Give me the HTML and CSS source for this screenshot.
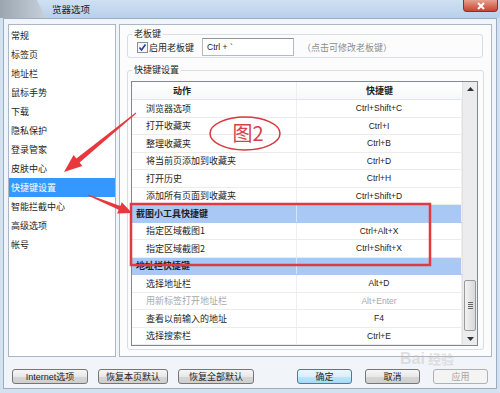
FILE: index.html
```html
<!DOCTYPE html>
<html lang="zh-CN">
<head>
    <meta charset="UTF-8">
    <title>浏览器选项</title>
    <link rel="stylesheet" href="styles.css">
</head>
<body>
    <div class="titlebar">
        <div class="ghost-tab"></div>
        <span class="title">览器选项</span>
        <div class="close">
            <svg width="10" height="8" viewBox="0 0 10 8"><path d="M2 1 L8 7 M8 1 L2 7" stroke="#fff" stroke-width="2"/></svg>
        </div>
    </div>

    <div class="window">
        <div class="main">
            <ul class="nav">
                <li>常规</li>
                <li>标签页</li>
                <li>地址栏</li>
                <li>鼠标手势</li>
                <li>下载</li>
                <li>隐私保护</li>
                <li>登录管家</li>
                <li>皮肤中心</li>
                <li class="active">快捷键设置</li>
                <li>智能拦截中心</li>
                <li>高级选项</li>
                <li>帐号</li>
            </ul>

            <div class="panel">
                <fieldset class="group boss">
                    <legend>老板键</legend>
                    <div class="boss-row">
                        <span class="checkbox">
                            <svg width="11" height="11" viewBox="0 0 11 11"><rect x="0.5" y="0.5" width="10" height="10" fill="#f4f6f9" stroke="#8f8f8f"/><path d="M2.5 5.5 L4.5 8 L8.5 2.5" fill="none" stroke="#2a3d8f" stroke-width="1.6"/></svg>
                        </span>
                        <span class="boss-label">启用老板键</span>
                        <span class="key-input">Ctrl + `</span>
                        <span class="hint">（点击可修改老板键）</span>
                    </div>
                </fieldset>

                <fieldset class="group keys">
                    <legend>快捷键设置</legend>
                    <div class="grid">
                        <div class="rows">
                            <div class="row head"><div class="cell act">动作</div><div class="cell key">快捷键</div></div>
                            <div class="row"><div class="cell act">浏览器选项</div><div class="cell key">Ctrl+Shift+C</div></div>
                            <div class="row"><div class="cell act">打开收藏夹</div><div class="cell key">Ctrl+I</div></div>
                            <div class="row"><div class="cell act">整理收藏夹</div><div class="cell key">Ctrl+B</div></div>
                            <div class="row"><div class="cell act">将当前页添加到收藏夹</div><div class="cell key">Ctrl+D</div></div>
                            <div class="row"><div class="cell act">打开历史</div><div class="cell key">Ctrl+H</div></div>
                            <div class="row"><div class="cell act">添加所有页面到收藏夹</div><div class="cell key">Ctrl+Shift+D</div></div>
                            <div class="row section"><div class="cell act">截图小工具快捷键</div><div class="cell key"></div></div>
                            <div class="row"><div class="cell act">指定区域截图1</div><div class="cell key">Ctrl+Alt+X</div></div>
                            <div class="row"><div class="cell act">指定区域截图2</div><div class="cell key">Ctrl+Shift+X</div></div>
                            <div class="row section"><div class="cell act">地址栏快捷键</div><div class="cell key"></div></div>
                            <div class="row"><div class="cell act">选择地址栏</div><div class="cell key">Alt+D</div></div>
                            <div class="row disabled"><div class="cell act">用新标签打开地址栏</div><div class="cell key">Alt+Enter</div></div>
                            <div class="row"><div class="cell act">查看以前输入的地址</div><div class="cell key">F4</div></div>
                            <div class="row"><div class="cell act">选择搜索栏</div><div class="cell key">Ctrl+E</div></div>
                        </div>
                        <div class="scrollbar">
                            <div class="sb-btn"><svg width="7" height="4" viewBox="0 0 7 4"><path d="M0 4 L3.5 0 L7 4 Z" fill="#333"/></svg></div>
                            <div class="sb-track">
                                <div class="sb-thumb"><span class="grip"></span></div>
                            </div>
                            <div class="sb-btn"><svg width="7" height="4" viewBox="0 0 7 4"><path d="M0 0 L3.5 4 L7 0 Z" fill="#333"/></svg></div>
                        </div>
                    </div>
                </fieldset>
            </div>
        </div>

        <div class="buttons">
            <div class="btn-group">
                <button class="btn wide">Internet选项</button>
                <button class="btn mid">恢复本页默认</button>
                <button class="btn wide">恢复全部默认</button>
            </div>
            <div class="btn-group right">
                <button class="btn default">确定</button>
                <button class="btn">取消</button>
                <button class="btn" disabled>应用</button>
            </div>
        </div>
    </div>

    <span class="watermark">Bai<span class="wm-cn">经验</span></span>

    <!-- red annotations drawn over the screenshot -->
    <svg class="notes" width="500" height="393" viewBox="0 0 500 393">
        <polygon points="135.7,112.6 136.3,113.4 79.6,162.4 82.4,165.9 64,172 73.6,155.1 76.4,158.6" fill="#e8383d"/>
        <polygon points="88.2,194.5 87.8,195.5 118.7,209.8 117.2,213.5 132,213 121.8,202.3 120.3,206.0" fill="#e8383d"/>
        <rect x="131" y="204" width="299" height="61" fill="none" stroke="#e03a3e" stroke-width="2.5"/>
        <ellipse cx="245" cy="133.5" rx="35" ry="16.5" fill="none" stroke="#d9363e" stroke-width="1.5"/>
        <text x="248" y="141" text-anchor="middle" class="fig-label">图2</text>
    </svg>
</body>
</html>
```

FILE: styles.css
```css
/* Page / window frame */
body {
    margin: 0;
    width: 500px;
    height: 393px;
    overflow: hidden;
    position: relative;
    background: #d3e1f1;
    font-family: "Noto Sans CJK SC", sans-serif;
    font-size: 9px;
    color: #1e1e1e;
}

/* Title bar */
.titlebar {
    height: 18px;
    display: flex;
    align-items: center;
    background: linear-gradient(to bottom, #cfe0f3, #b9d0ea);
}

.ghost-tab {
    width: 46px;
    height: 18px;
    background: linear-gradient(to right, #9ca6b1, #c6d0da);
    clip-path: polygon(0 0, 80% 0, 100% 100%, 0 100%);
}

.title {
    margin-left: 6px;
    font-size: 9.5px;
    color: #222;
}

.close {
    margin-left: auto;
    margin-right: 2px;
    align-self: flex-start;
    width: 35px;
    height: 12px;
    box-sizing: border-box;
    border: 1px solid #8b3024;
    border-top: none;
    border-radius: 0 0 4px 4px;
    background: linear-gradient(to bottom, #e6a08e, #c9432f);
    display: flex;
    align-items: center;
    justify-content: center;
}

.window {
    margin: 0 3px;
    height: 371px;
    box-sizing: border-box;
    border: 1px solid #9aadc5;
    background: #f1f4f8;
}

.main {
    display: flex;
    gap: 3px;
    padding: 5px 4px 0 4px;
}

/* Left category list */
.nav {
    list-style: none;
    margin: 0;
    padding: 1px 0 0 0;
    width: 108px;
    height: 333px;
    box-sizing: border-box;
    border: 1px solid #aab7c7;
    background: #fff;
}

.nav li {
    height: 19px;
    line-height: 19px;
    padding-left: 2px;
}

.nav li.active {
    background: #3399ff;
    color: #fff;
}

/* Right settings panel */
.panel {
    width: 373px;
    height: 333px;
    box-sizing: border-box;
    border: 1px solid #aab7c7;
    background: #fcfcfd;
    padding: 0 8px 0 7px;
}

.group {
    margin: 0;
    border: 1px solid #d5dde6;
    border-radius: 3px;
}

.group legend {
    padding: 0 2px;
    line-height: 14px;
}

.boss {
    margin-top: 2px;
    padding: 0 8px 1px 9px;
}

.boss legend {
    margin-left: -5px;
}

.boss-row {
    margin-top: -3px;
    height: 18px;
    display: flex;
    align-items: center;
}

.checkbox {
    display: flex;
    width: 11px;
    height: 11px;
}

.boss-label {
    margin-left: 1px;
}

.key-input {
    margin-left: 8px;
    width: 92px;
    height: 18px;
    box-sizing: border-box;
    border: 1px solid #b5b9c1;
    border-top-color: #8e949c;
    background: #fff;
    padding-left: 4px;
    display: flex;
    align-items: center;
    font-family: "Liberation Sans", sans-serif;
    font-size: 8.5px;
}

.hint {
    margin-left: 8px;
    color: #8c8c8c;
}

.keys {
    margin-top: 5px;
    padding: 0 5px 3px 3px;
}

.keys legend {
    margin-left: 1px;
}

/* Shortcut list */
.grid {
    margin-top: 4px;
    height: 265px;
    box-sizing: border-box;
    border: 1px solid #828790;
    display: flex;
    background: #fff;
}

.rows {
    width: 330px;
    overflow: hidden;
}

.row {
    display: grid;
    grid-template-columns: 165px 165px;
    height: 17.5px;
    box-sizing: border-box;
    border-bottom: 1px solid #ececec;
}

.cell {
    display: flex;
    align-items: center;
    border-right: 1px solid #efefef;
    white-space: nowrap;
}

.cell.act {
    padding-left: 14px;
}

.cell.key {
    justify-content: center;
    font-family: "Liberation Sans", sans-serif;
    font-size: 8.5px;
    color: #222;
}

.row.head {
    height: 18px;
    font-weight: bold;
    background: linear-gradient(to bottom, #ffffff, #f7f8f9);
    border-bottom-color: #e2e4e7;
}

.row.head .cell.act {
    padding-left: 41px;
}

.row.head .cell.key {
    font-family: "Noto Sans CJK SC", sans-serif;
    font-size: 9px;
    border-right: none;
}

.row.section {
    background: #a9c9f4;
    font-weight: bold;
    border-bottom-color: #a9c9f4;
}

.row.section .cell.act {
    padding-left: 4px;
    border-right-color: #d4e4fa;
}

.row.disabled {
    color: #a8a8a8;
}

.row.disabled .cell.key {
    color: #a8a8a8;
}

/* Scrollbar */
.scrollbar {
    width: 14px;
    display: flex;
    flex-direction: column;
    background: #ececec;
    border-left: 1px solid #e2e2e2;
}

.sb-btn {
    height: 13px;
    display: flex;
    align-items: center;
    justify-content: center;
}

.sb-track {
    flex: 1;
    display: flex;
    flex-direction: column;
    justify-content: flex-end;
    padding-bottom: 1px;
}

.sb-thumb {
    height: 51px;
    margin: 0 1px;
    box-sizing: border-box;
    border: 1px solid #999;
    border-radius: 2px;
    background: linear-gradient(to right, #f2f2f2, #d8d8d8);
    display: flex;
    align-items: center;
    justify-content: center;
}

.grip {
    width: 5px;
    height: 7px;
    background: repeating-linear-gradient(to bottom, #666 0 1px, transparent 1px 2px);
}

/* Bottom buttons */
.buttons {
    display: flex;
    justify-content: space-between;
    margin-top: 12px;
    padding: 0 8px;
}

.btn-group {
    display: flex;
    gap: 10px;
}

.btn-group.right {
    gap: 13px;
}

.btn {
    width: 55px;
    height: 15px;
    padding: 0;
    border: 1px solid #767676;
    border-radius: 3px;
    background: linear-gradient(to bottom, #f6f6f6 0%, #e8e8e8 50%, #d6d6d6 51%, #cfcfcf 100%);
    font-family: "Liberation Sans", "Noto Sans CJK SC", sans-serif;
    font-size: 9px;
    color: #1e1e1e;
}

.btn.wide {
    width: 76px;
}

.btn.mid {
    width: 70px;
}

.btn.default {
    border-color: #3c7fb1;
    background: linear-gradient(to bottom, #eaf6fd 0%, #d9f0fc 50%, #bee6fd 51%, #a7d9f5 100%);
}

.btn:disabled {
    border-color: #adb2b5;
    background: #f4f4f4;
    color: #a3a3a3;
}

/* Watermark and red annotations */
.watermark {
    position: absolute;
    left: 400px;
    top: 349px;
    font-family: "Liberation Sans", sans-serif;
    font-size: 16px;
    font-weight: bold;
    color: rgba(190, 190, 190, 0.45);
}

.wm-cn {
    font-family: "Noto Sans CJK SC", sans-serif;
    font-size: 13px;
    margin-left: 3px;
}

.notes {
    position: absolute;
    left: 0;
    top: 0;
    pointer-events: none;
}

.fig-label {
    font-family: "Noto Sans CJK SC", sans-serif;
    font-size: 20px;
    fill: #d8404a;
}
```
